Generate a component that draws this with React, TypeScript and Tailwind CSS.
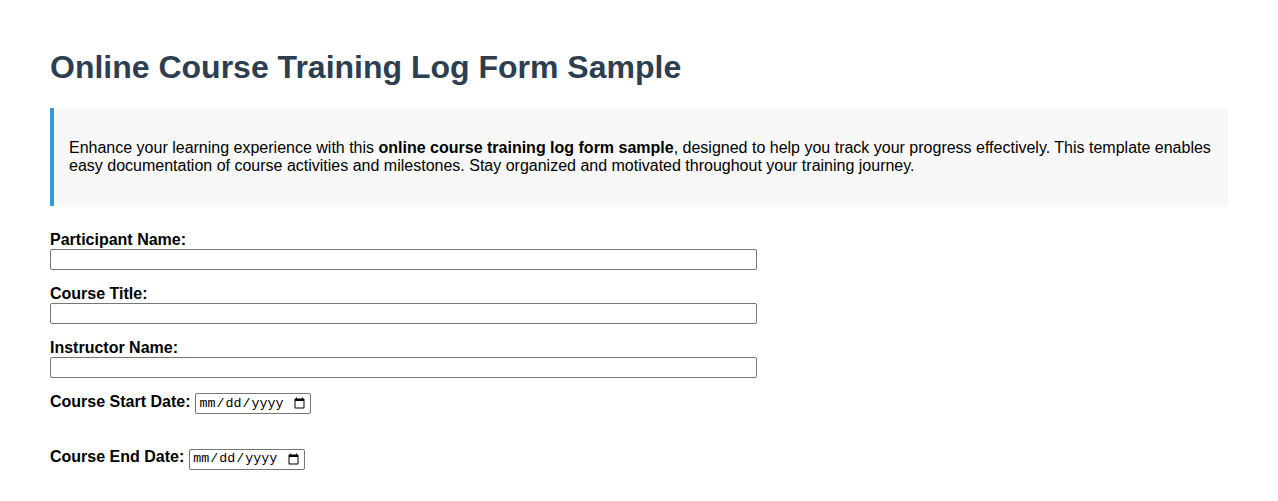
import React from "react";

// Training log form — static sample layout

const textFields = ["Participant Name:", "Course Title:", "Instructor Name:"];

export default function App() {
  return (
    <div className="min-h-screen bg-white px-[50px] pt-[49px] pb-6 font-['Liberation_Sans',Arial,sans-serif] text-black">
      <h1 className="text-[32px] leading-[37px] font-bold text-[#2c3e50]">Online Course Training Log Form Sample</h1>

      <div className="mt-[22px] bg-[#f8f8f8] border-l-4 border-[#3498db] px-[15px] py-[31px] text-[16px] leading-[18px]">
        <p>
          Enhance your learning experience with this <strong>online course training log form sample</strong>, designed to help you
          track your progress effectively. This template enables easy documentation of course activities and milestones. Stay
          organized and motivated throughout your training journey.
        </p>
      </div>

      <form className="mt-[25px]">
        {textFields.map(label => (
          <div key={label} className="mb-[15px]">
            <label className="block text-[16px] leading-[18px] font-bold">{label}</label>
            <input
              type="text"
              className="block w-[60%] h-[21px] border border-[#767676] rounded-[2px] px-[2px] text-[13.33px] bg-white"
            />
          </div>
        ))}

        <div className="flex items-baseline gap-[5px] mb-[34px]">
          <label className="text-[16px] leading-[18px] font-bold">Course Start Date:</label>
          <input
            type="date"
            className="w-[116px] h-[21px] border border-[#767676] rounded-[2px] px-[2px] text-[13.33px] font-mono bg-white"
          />
        </div>

        <div className="flex items-baseline gap-[5px]">
          <label className="text-[16px] leading-[18px] font-bold">Course End Date:</label>
          <input
            type="date"
            className="w-[116px] h-[21px] border border-[#767676] rounded-[2px] px-[2px] text-[13.33px] font-mono bg-white"
          />
        </div>
      </form>
    </div>
  );
}
